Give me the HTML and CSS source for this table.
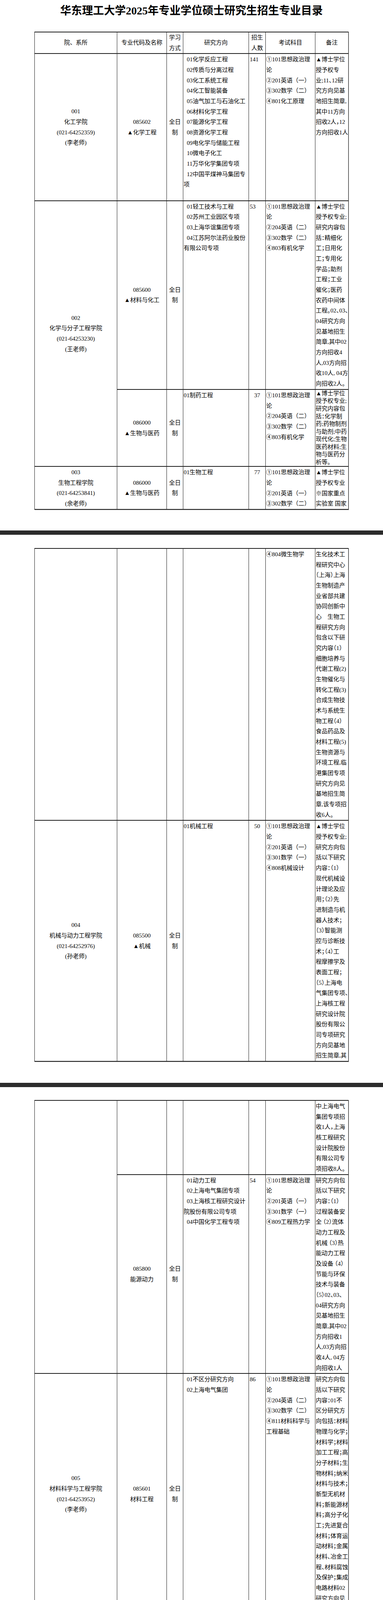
FILE: index.html
```html
<!DOCTYPE html>
<html lang="zh-CN">
<head>
<meta charset="utf-8">
<title>华东理工大学2025年专业学位硕士研究生招生专业目录</title>
<link rel="stylesheet" href="styles.css">
</head>
<body>
<div class="page p1">
  <h1 class="title">华东理工大学2025年专业学位硕士研究生招生专业目录</h1>
  <table class="tbl">
    <colgroup><col class="c1"><col class="c2"><col class="c3"><col class="c4"><col class="c5"><col class="c6"><col class="c7"></colgroup>
    <thead>
      <tr>
        <th>院、系所</th>
        <th>专业代码及名称</th>
        <th>学习<br>方式</th>
        <th>研究方向</th>
        <th>招生<br>人数</th>
        <th>考试科目</th>
        <th>备注</th>
      </tr>
    </thead>
    <tbody>
      <tr>
        <td class="mid">001<br>化工学院<br>(021-64252359)<br>(李老师)</td>
        <td class="mid">085602<br>▲化学工程</td>
        <td class="mid">全日<br>制</td>
        <td class="dir">
          <p class="it">01化学反应工程</p>
          <p class="it">02传质与分离过程</p>
          <p class="it">03化工系统工程</p>
          <p class="it">04化工智能装备</p>
          <p class="it">05油气加工与石油化工</p>
          <p class="it">06材料化学工程</p>
          <p class="it">07能源化学工程</p>
          <p class="it">08资源化学工程</p>
          <p class="it">09电化学与储能工程</p>
          <p class="it">10微电子化工</p>
          <p class="it">11万华化学集团专项</p>
          <p class="it">12中国平煤神马集团专<br>项</p>
          <p class="it blank"></p>
        </td>
        <td class="num">141</td>
        <td class="exam">①101思想政治理<br>论<br>②201英语（一）<br>③302数学（二）<br>④801化工原理</td>
        <td class="note">▲博士学位<br>授予权专<br>业;11、12研<br>究方向见基<br>地招生简章,<br>其中11方向<br>招收2人，12<br>方向招收1人</td>
      </tr>
      <tr>
        <td class="mid" rowspan="2">002<br>化学与分子工程学院<br>(021-64253230)<br>(王老师)</td>
        <td class="mid">085600<br>▲材料与化工</td>
        <td class="mid">全日<br>制</td>
        <td class="dir">
          <p class="it">01轻工技术与工程</p>
          <p class="it">02苏州工业园区专项</p>
          <p class="it">03上海华谊集团专项</p>
          <p class="it">04江苏阿尔法药业股份<br>有限公司专项</p>
        </td>
        <td class="num">53</td>
        <td class="exam">①101思想政治理<br>论<br>②204英语（二）<br>③302数学（二）<br>④803有机化学</td>
        <td class="note">▲博士学位<br>授予权专业;<br>研究内容包<br>括：精细化<br>工；日用化<br>工；专用化<br>学品；助剂<br>工程；工业<br>催化；医药<br>农药中间体<br>工程。02、03、<br>04研究方向<br>见基地招生<br>简章,其中02<br>方向招收4<br>人,03方向招<br>收10人, 04方<br>向招收2人。</td>
      </tr>
      <tr>
        <td class="mid">086000<br>▲生物与医药</td>
        <td class="mid">全日<br>制</td>
        <td class="dir"><p>01制药工程</p></td>
        <td class="num ctr">37</td>
        <td class="exam">①101思想政治理<br>论<br>②204英语（二）<br>③302数学（二）<br>④803有机化学</td>
        <td class="note dense">▲博士学位<br>授予权专业;<br>研究内容包<br>括：化学制<br>药;药物制剂<br>与助剂;中药<br>现代化;生物<br>医药材料;生<br>物与医药分<br>析等。</td>
      </tr>
      <tr>
        <td class="mid">003<br>生物工程学院<br>(021-64253841)<br>(余老师)</td>
        <td class="mid">086000<br>▲生物与医药</td>
        <td class="mid">全日<br>制</td>
        <td class="dir"><p>01生物工程</p></td>
        <td class="num ctr">77</td>
        <td class="exam">①101思想政治理<br>论<br>②201英语（一）<br>③302数学（二）</td>
        <td class="note">▲博士学位<br>授予权专业<br>※国家重点<br>实验室 国家</td>
      </tr>
    </tbody>
  </table>
</div>
<div class="sep"></div>
<div class="page p2">
  <table class="tbl">
    <colgroup><col class="c1"><col class="c2"><col class="c3"><col class="c4"><col class="c5"><col class="c6"><col class="c7"></colgroup>
    <tbody>
      <tr>
        <td class="mid"></td>
        <td class="mid"></td>
        <td class="mid"></td>
        <td class="dir"></td>
        <td class="num"></td>
        <td class="exam">④804微生物学</td>
        <td class="note">生化技术工<br>程研究中心<br>（上海）上海<br>生物制造产<br>业省部共建<br>协同创新中<br>心　生物工<br>程研究方向<br>包含以下研<br>究内容（1）<br>细胞培养与<br>代谢工程(2)<br>生物催化与<br>转化工程(3)<br>合成生物技<br>术与系统生<br>物工程（4）<br>食品药品及<br>材料工程(5)<br>生物资源与<br>环境工程,临<br>港集团专项<br>研究方向见<br>基地招生简<br>章,该专项招<br>收6人。</td>
      </tr>
      <tr>
        <td class="mid">004<br>机械与动力工程学院<br>(021-64252976)<br>(孙老师)</td>
        <td class="mid">085500<br>▲机械</td>
        <td class="mid">全日<br>制</td>
        <td class="dir"><p>01机械工程</p></td>
        <td class="num ctr">50</td>
        <td class="exam">①101思想政治理<br>论<br>②201英语（一）<br>③301数学（一）<br>④808机械设计</td>
        <td class="note">▲博士学位<br>授予权专业;<br>研究方向包<br>括以下研究<br>内容：（1）<br>现代机械设<br>计理论及应<br>用；（2）先<br>进制造与机<br>器人技术；<br>（3）智能测<br>控与诊断技<br>术；（4）工<br>程摩擦学及<br>表面工程；<br>（5）上海电<br>气集团专项、<br>上海核工程<br>研究设计院<br>股份有限公<br>司专项研究<br>方向见基地<br>招生简章,其</td>
      </tr>
    </tbody>
  </table>
</div>
<div class="sep"></div>
<div class="page p3">
  <table class="tbl">
    <colgroup><col class="c1"><col class="c2"><col class="c3"><col class="c4"><col class="c5"><col class="c6"><col class="c7"></colgroup>
    <tbody>
      <tr>
        <td class="mid" rowspan="2"></td>
        <td class="mid"></td>
        <td class="mid"></td>
        <td class="dir"></td>
        <td class="num"></td>
        <td class="exam"></td>
        <td class="note">中上海电气<br>集团专项招<br>收1人，上海<br>核工程研究<br>设计院股份<br>有限公司专<br>项招收8人。</td>
      </tr>
      <tr>
        <td class="mid">085800<br>能源动力</td>
        <td class="mid">全日<br>制</td>
        <td class="dir">
          <p class="it">01动力工程</p>
          <p class="it">02上海电气集团专项</p>
          <p class="it">03上海核工程研究设计<br>院股份有限公司专项</p>
          <p class="it">04中国化学工程专项</p>
        </td>
        <td class="num">54</td>
        <td class="exam">①101思想政治理<br>论<br>②201英语（一）<br>③301数学（一）<br>④809工程热力学</td>
        <td class="note">研究方向包<br>括以下研究<br>内容：（1）<br>过程装备安<br>全 （2）流体<br>动力工程及<br>机械 （3）热<br>能动力工程<br>及设备 （4）<br>节能与环保<br>技术与装备<br>（5）02、03、<br>04研究方向<br>见基地招生<br>简章,其中02<br>方向招收1<br>人,03方向招<br>收4人, 04方<br>向招收1人</td>
      </tr>
      <tr>
        <td class="mid">005<br>材料科学与工程学院<br>(021-64253952)<br>(李老师)</td>
        <td class="mid">085601<br>材料工程</td>
        <td class="mid">全日<br>制</td>
        <td class="dir">
          <p class="it">01不区分研究方向</p>
          <p class="it">02上海电气集团</p>
        </td>
        <td class="num">86</td>
        <td class="exam">①101思想政治理<br>论<br>②204英语（二）<br>③302数学（二）<br>④811材料科学与<br>工程基础</td>
        <td class="note">研究方向包<br>括以下研究<br>内容：01不<br>区分研究方<br>向包括：材料<br>物理与化学；<br>材料学；材料<br>加工工程；高<br>分子材料；生<br>物材料；纳米<br>材料与技术；<br>新型无机材<br>料；新能源材<br>料；高分子化<br>工；先进复合<br>材料；体育运<br>动材料；金属<br>材料、冶金工<br>程、材料腐蚀<br>及保护；集成<br>电路材料02<br>研究方向见<br>基地招生简</td>
      </tr>
    </tbody>
  </table>
</div>
<div class="sep last"></div>
</body>
</html>
```

FILE: styles.css
```css
html, body {
  margin: 0;
  padding: 0;
  background: #ffffff;
}

body {
  font-family: "Liberation Serif", "Noto Sans CJK SC", serif;
  color: #000;
  font-size: 15px;
}

.page {
  background: #ffffff;
  box-sizing: border-box;
  overflow: hidden;
}

.p1 {
  height: 1358px;
  padding-top: 10px;
}

.p2 {
  height: 1403px;
  padding-top: 34px;
}

.p3 {
  height: 1403px;
  padding-top: 33px;
}

.sep {
  height: 11px;
  background: #2b2b2b;
}

.sep.last {
  height: 18px;
}

.title {
  margin: 0 0 35px;
  text-align: center;
  font-family: "Liberation Serif", "Noto Sans CJK SC", serif;
  font-weight: bold;
  font-size: 28px;
  line-height: 36px;
}

.tbl {
  width: 803px;
  margin: 0 auto;
  border-collapse: collapse;
  table-layout: fixed;
  box-shadow: 1px 1px 0 #b5b5b5;
}

.c1 { width: 211px; }
.c2 { width: 127px; }
.c3 { width: 42px; }
.c4 { width: 168px; }
.c5 { width: 43px; }
.c6 { width: 127px; }
.c7 { width: 85px; }

.tbl th,
.tbl td {
  border-left: 1px solid #1e1e1e;
  border-right: 1px solid #1e1e1e;
  border-top: 2px solid #1e1e1e;
  border-bottom: 2px solid #1e1e1e;
  font-weight: normal;
  font-size: 15px;
  line-height: 26.67px;
  white-space: nowrap;
}

.tbl th {
  height: 53px;
  padding: 0;
  text-align: center;
  vertical-align: middle;
}

.tbl td {
  padding: 1px 0 0 1px;
  vertical-align: top;
  text-align: left;
}

.tbl td.mid {
  text-align: center;
  vertical-align: middle;
  padding: 0;
}

.dir p {
  margin: 0;
}

.dir .it {
  text-indent: 8px;
}

.dir .blank {
  height: 26.67px;
}

.tbl td.num {
  padding-left: 2px;
}

.tbl td.ctr {
  text-align: center;
  padding-left: 0;
}

.tbl td.note {
  font-feature-settings: "halt";
  overflow: hidden;
}

.tbl td.dense {
  line-height: 19.56px;
  padding-top: 0;
}
```
